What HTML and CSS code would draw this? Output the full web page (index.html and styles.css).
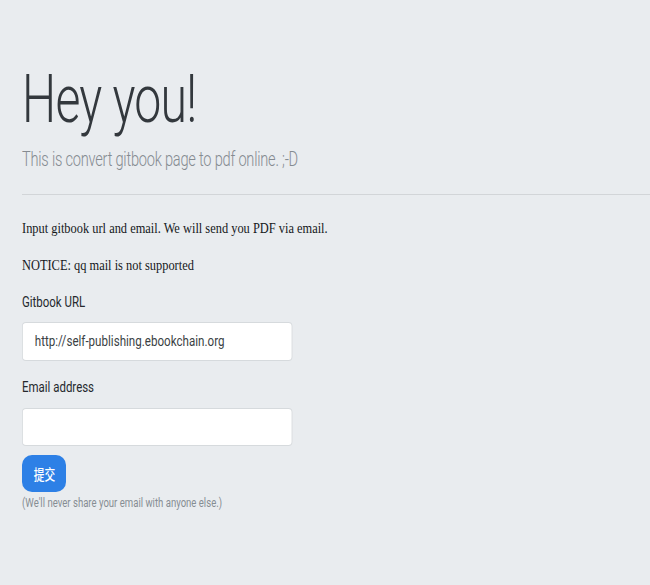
FILE: index.html
```html
<!DOCTYPE html>
<html>
<head>
<meta charset="utf-8">
<link rel="stylesheet" href="styles.css">
</head>
<body>
<div class="jumbotron">
  <h1 class="display">Hey you!</h1>
  <p class="lead">This is convert gitbook page to pdf online. ;-D</p>
  <hr class="divider">
  <p class="intro">Input gitbook url and email. We will send you PDF via email.</p>
  <p class="notice">NOTICE: qq mail is not supported</p>
  <form class="form">
    <label class="label" for="url">Gitbook URL</label>
    <input class="input" id="url" type="text" value="http://self-publishing.ebookchain.org">
    <label class="label label-email" for="email">Email address</label>
    <input class="input input-email" id="email" type="email">
    <button class="btn" type="button"><span class="btn-text">提交</span></button>
    <small class="muted">(We'll never share your email with anyone else.)</small>
  </form>
</div>
</body>
</html>
```
FILE: styles.css
```css
html, body {
  margin: 0;
  padding: 0;
  background: #e9ecef;
}
.jumbotron {
  background: #e9ecef;
  padding: 60px 0 40px 22px;
  min-height: 485px;
  overflow: hidden;
}
.display {
  margin: 0;
  font-family: Roboto, "Liberation Sans", sans-serif;
  font-weight: 300;
  font-size: 66px;
  line-height: 79px;
  color: #33383d;
  letter-spacing: -1px;
  transform: scaleX(0.73);
  transform-origin: 0 0;
}
.lead {
  margin: 5px 0 0;
  font-family: Roboto, "Liberation Sans", sans-serif;
  font-weight: 300;
  font-size: 20px;
  line-height: 30px;
  color: #858b91;
  letter-spacing: -0.3px;
  transform: scaleX(0.73);
  transform-origin: 0 0;
}
.divider {
  margin: 20px 0 0;
  border: 0;
  border-top: 1px solid #d2d5d8;
  height: 0;
}
.intro, .notice {
  font-family: "Liberation Serif", serif;
  font-size: 15.5px;
  line-height: 22px;
  color: #15181b;
  margin: 0;
  transform: scaleX(0.8);
  transform-origin: 0 0;
}
.intro { margin-top: 22px; }
.notice { margin-top: 15px; }
.form {
  display: flex;
  flex-direction: column;
  align-items: flex-start;
}
.label {
  font-family: Roboto, "Liberation Sans", sans-serif;
  font-size: 14.5px;
  line-height: 22px;
  color: #25292d;
  margin-top: 16px;
  transform: scaleX(0.79);
  transform-origin: 0 0;
}
.input {
  box-sizing: border-box;
  width: 337.5px;
  height: 39px;
  margin-top: 8px;
  padding: 0 15px;
  border: 1px solid #d6dadd;
  border-radius: 5px / 4px;
  background: #fff;
  font-family: Roboto, "Liberation Sans", sans-serif;
  font-size: 14.5px;
  color: #3a3f44;
  outline: none;
  transform: scaleX(0.8);
  transform-origin: 0 0;
}
.input-email {
  height: 38px;
  margin-top: 9px;
}
.btn {
  margin-top: 9px;
  width: 44px;
  height: 37px;
  padding: 0;
  border: 0;
  border-radius: 10px;
  background: #2d80e6;
  color: #fff;
  font-family: "Noto Sans CJK SC", sans-serif;
  font-size: 14.5px;
  font-weight: 500;
}
.btn-text {
  display: inline-block;
  transform: scaleX(0.74);
}
.muted {
  margin-top: 3px;
  font-family: Roboto, "Liberation Sans", sans-serif;
  font-size: 12.5px;
  line-height: 16px;
  color: #868d93;
  transform: scaleX(0.765);
  transform-origin: 0 0;
}
```
